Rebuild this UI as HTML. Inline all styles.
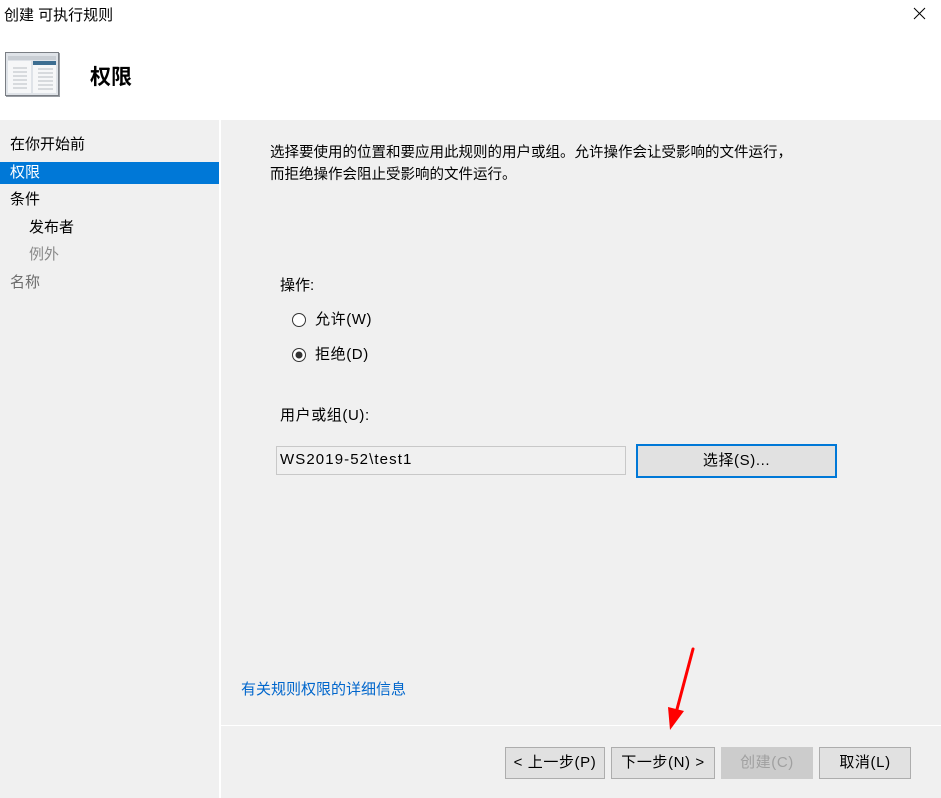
<!DOCTYPE html>
<html><head><meta charset="utf-8"><style>
*{margin:0;padding:0;box-sizing:border-box}
body{width:941px;height:798px;position:relative;background:#f0f0f0;font-family:"Liberation Sans","Noto Sans CJK SC",sans-serif;font-size:15px;color:#000;overflow:hidden}
.a{position:absolute;white-space:nowrap;line-height:20px}
.l{letter-spacing:0.6px}
.head{position:absolute;left:0;top:0;width:941px;height:120px;background:#fff}
.side{position:absolute;left:0;top:120px;width:219px;height:678px;background:#f0f0f0}
.vl{position:absolute;left:219px;top:120px;width:2px;height:678px;background:#fff}
.hl{position:absolute;left:221px;top:725px;width:720px;height:1px;background:#fff}
.btn{position:absolute;top:747px;height:32px;border:1px solid #adadad;background:#e1e1e1;text-align:center;line-height:30px;font-size:15px}
</style></head><body>
<div class="head"></div>
<div class="a" style="left:4px;top:6px">创建 可执行规则</div>
<svg class="a" style="left:913px;top:7px" width="13" height="13" viewBox="0 0 13 13"><path d="M1 1L12 12M12 1L1 12" stroke="#000" stroke-width="1"/></svg>
<svg class="a" style="left:5px;top:52px" width="56" height="46" viewBox="0 0 56 46">
<rect x="1" y="1" width="54" height="44" fill="#9a9ea4"/>
<rect x="0.5" y="0.5" width="53" height="43" fill="#dfe3e8" stroke="#7a7e84"/>
<rect x="3" y="4" width="48" height="4" fill="#c9ced4"/>
<rect x="3" y="9" width="23" height="32" fill="#f6f7f8"/>
<rect x="28" y="9" width="23" height="32" fill="#f6f7f8"/>
<rect x="28" y="9" width="23" height="4" fill="#3d6e91"/>
<g stroke="#b8bcc2"><path d="M8 16H22M8 20H22M8 24H22M8 28H22M8 32H22M8 36H22M33 17H48M33 21H48M33 25H48M33 29H48M33 33H48M33 37H48"/></g>
</svg>
<div class="a" style="left:90px;top:66px;font-size:21px;font-weight:bold;line-height:24px">权限</div>
<div class="side"></div>
<div class="vl"></div>
<div class="a" style="left:10px;top:135px">在你开始前</div>
<div style="position:absolute;left:0;top:162px;width:219px;height:22px;background:#0078d7"></div>
<div class="a" style="left:10px;top:163px;color:#fff">权限</div>
<div class="a" style="left:10px;top:190px">条件</div>
<div class="a" style="left:29px;top:218px">发布者</div>
<div class="a" style="left:29px;top:245px;color:#8a8a8a">例外</div>
<div class="a" style="left:10px;top:273px;color:#6d6d6d">名称</div>
<div class="a" style="left:270px;top:143px;font-size:14.5px">选择要使用的位置和要应用此规则的用户或组。允许操作会让受影响的文件运行，</div>
<div class="a" style="left:270px;top:165px;font-size:14.5px">而拒绝操作会阻止受影响的文件运行。</div>
<div class="a" style="left:280px;top:276px">操作:</div>
<svg class="a" style="left:291px;top:312px" width="16" height="16"><circle cx="8" cy="8" r="6.5" fill="#fff" stroke="#333"/></svg>
<div class="a l" style="left:315px;top:310px">允许(W)</div>
<svg class="a" style="left:291px;top:347px" width="16" height="16"><circle cx="8" cy="8" r="6.5" fill="#fff" stroke="#333"/><circle cx="8" cy="8" r="3.5" fill="#333"/></svg>
<div class="a l" style="left:315px;top:345px">拒绝(D)</div>
<div class="a l" style="left:280px;top:406px">用户或组(U):</div>
<div style="position:absolute;left:276px;top:446px;width:350px;height:29px;border:1px solid #c8c8c8;background:#f0f0f0"></div>
<div class="a" style="left:280px;top:450px;letter-spacing:1.1px">WS2019-52\test1</div>
<div class="l" style="position:absolute;left:636px;top:444px;width:201px;height:34px;border:2px solid #0078d7;background:#e1e1e1;text-align:center;line-height:30px">选择(S)...</div>
<div class="a" style="left:241px;top:680px;color:#0066cc">有关规则权限的详细信息</div>
<div class="hl"></div>
<div class="btn l" style="left:505px;width:100px">&lt; 上一步(P)</div>
<div class="btn l" style="left:611px;width:104px">下一步(N) &gt;</div>
<div class="btn l" style="left:721px;width:92px;color:#a0a0a0;border-color:#cccccc;background:#cccccc">创建(C)</div>
<div class="btn l" style="left:819px;width:92px">取消(L)</div>
<svg class="a" style="left:660px;top:645px" width="40" height="90" viewBox="0 0 40 90"><path d="M33 4L16 68" stroke="#f00" stroke-width="3" stroke-linecap="round"/><path d="M8 62L10 85L24 66Z" fill="#f00"/></svg>
</body></html>
